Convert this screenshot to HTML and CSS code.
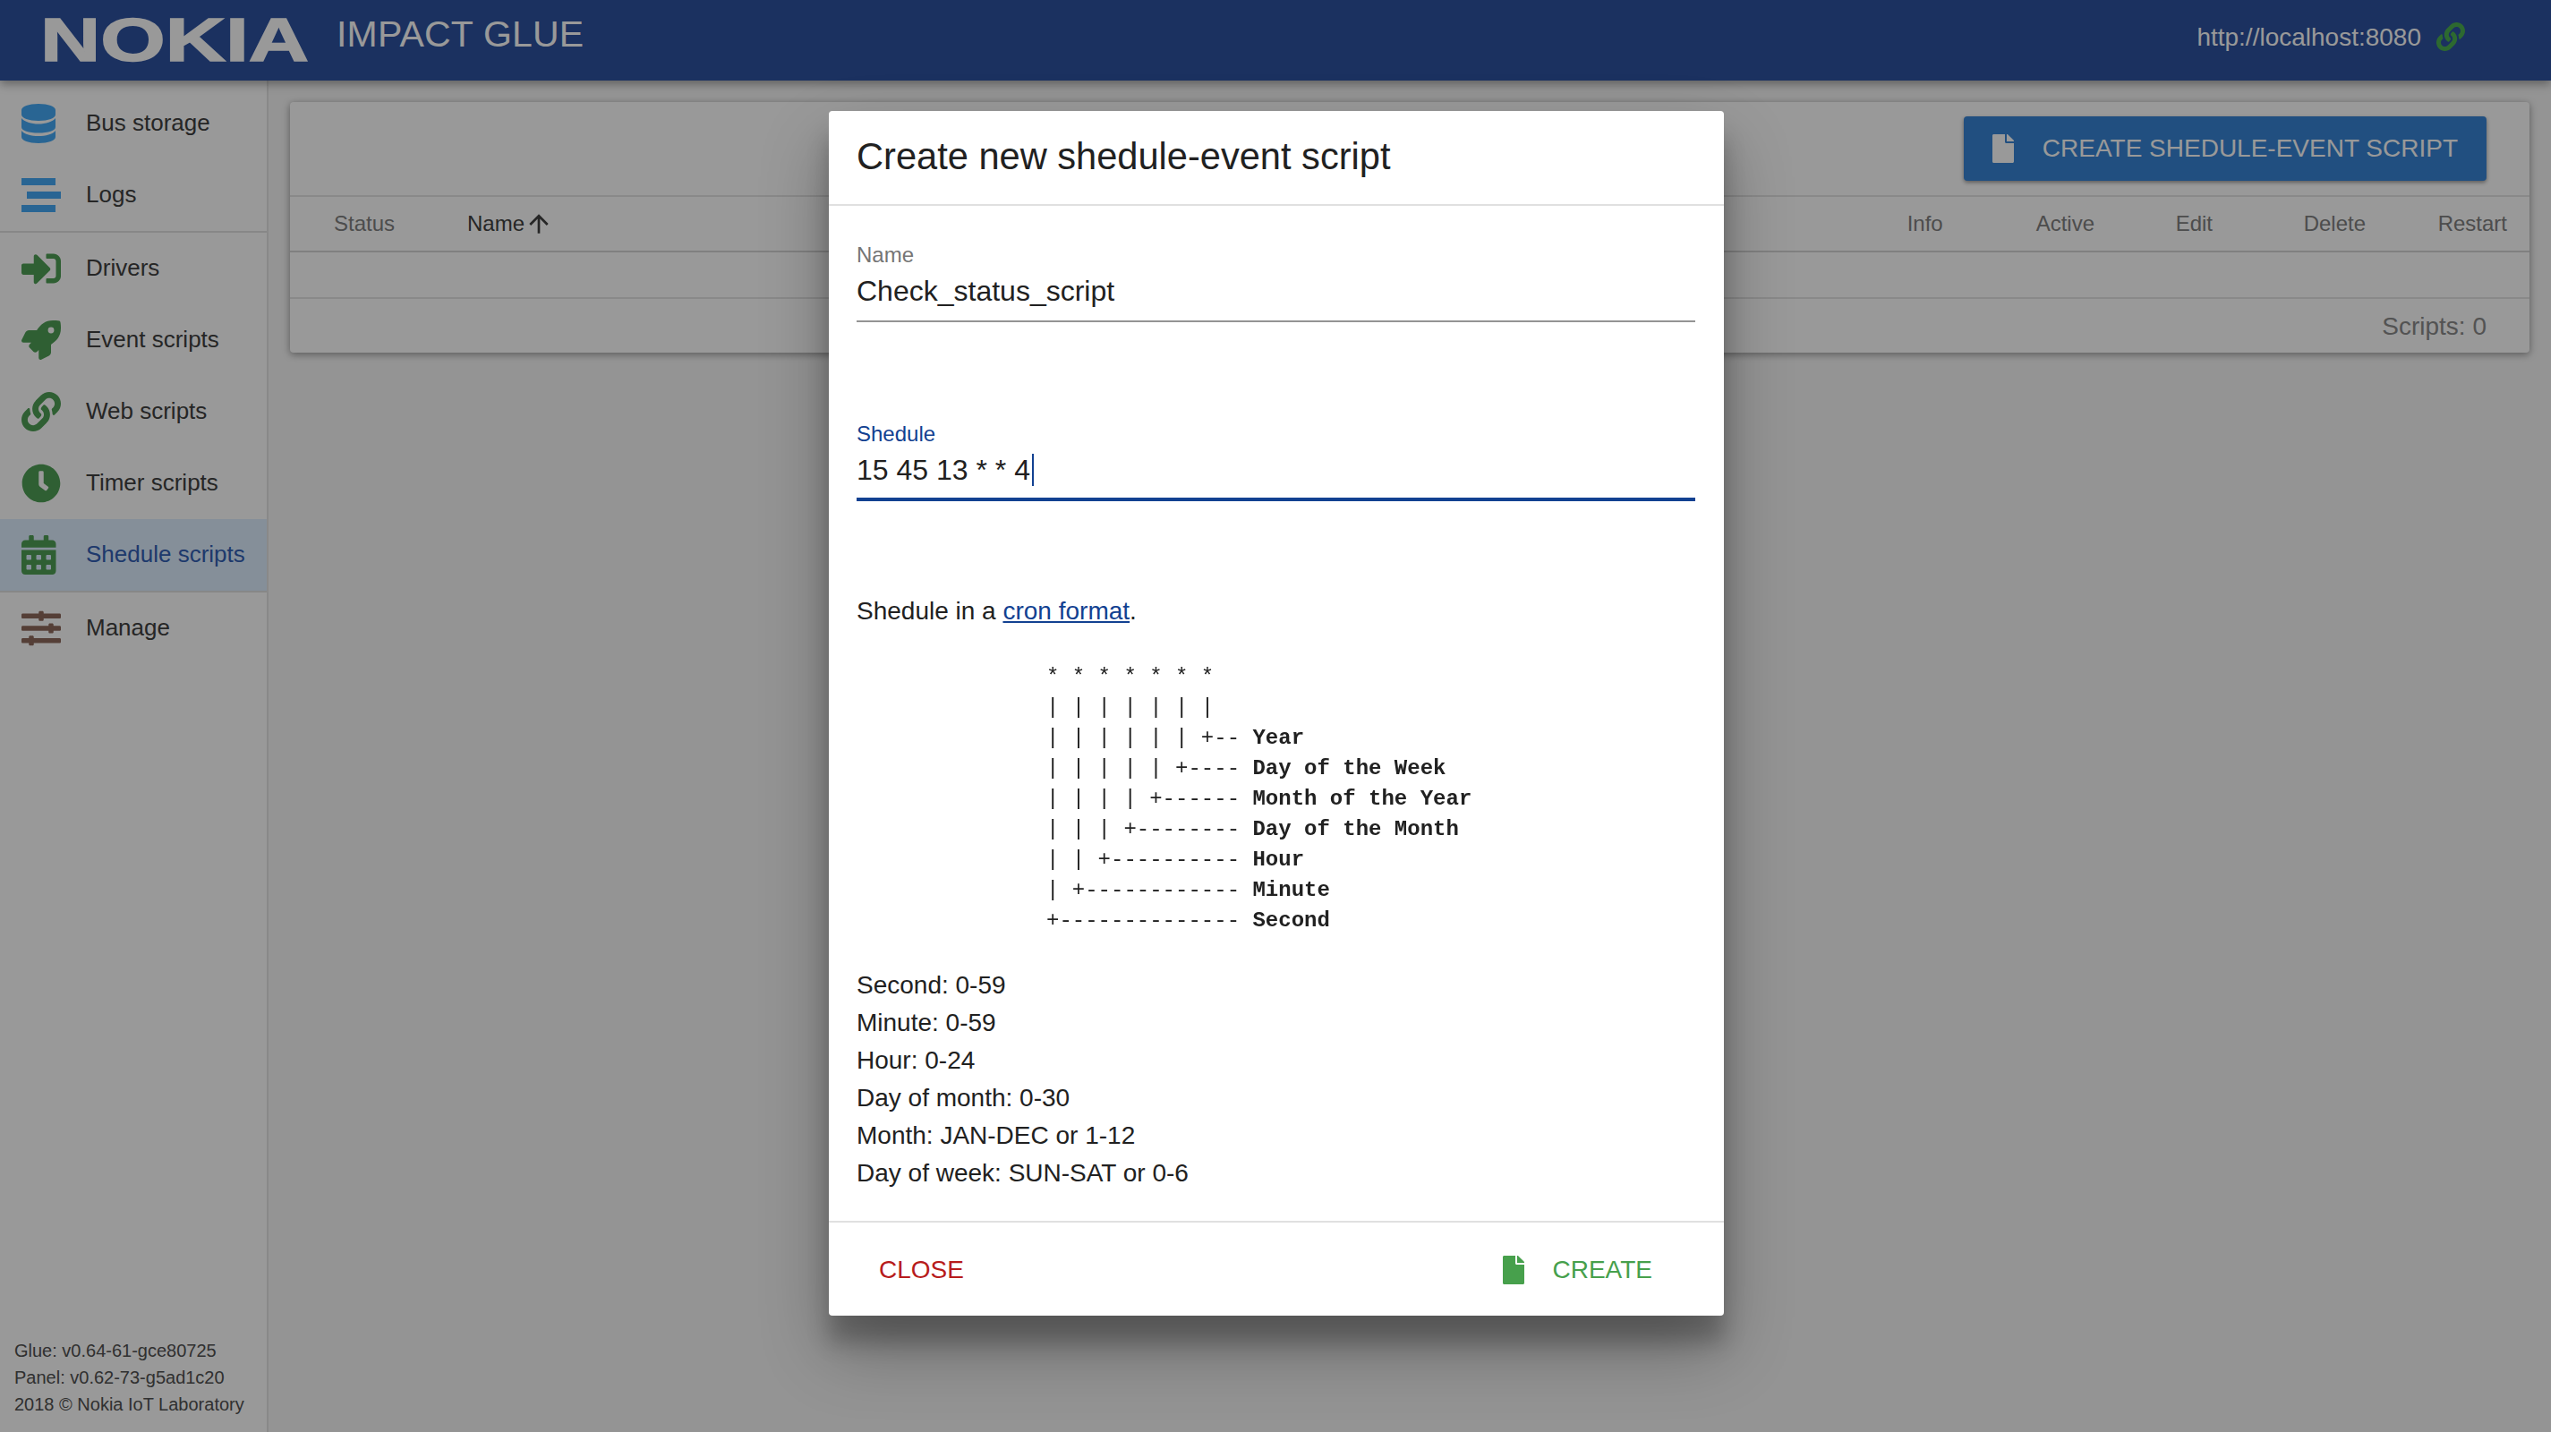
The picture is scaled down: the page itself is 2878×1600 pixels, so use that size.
FILE: index.html
```html
<!DOCTYPE html>
<html>

<head>
    <title>Impact Glue</title>
    <link rel="stylesheet" href="styles.css">
</head>

<body>
    <div class="app">
        <header class="topbar">
            <svg class="logo" viewBox="0 0 296 49"><text x="-3" y="49" textLength="300" lengthAdjust="spacingAndGlyphs">NOKIA</text></svg>
            <div class="app-title">IMPACT GLUE</div>
            <div class="endpoint">http://localhost:8080</div>
            <svg class="endpoint-icon" viewBox="0 0 512 512"><path d="M326.612 185.391c59.747 59.809 58.927 155.698.36 214.59-.11.12-.24.25-.36.37l-67.2 67.2c-59.27 59.27-155.699 59.262-214.96 0-59.27-59.26-59.27-155.7 0-214.96l37.106-37.106c9.84-9.84 26.786-3.3 27.294 10.606.648 17.722 3.826 35.527 9.69 52.721 1.986 5.822.567 12.262-3.783 16.612l-13.087 13.087c-28.026 28.026-28.905 73.66-1.155 101.96 28.024 28.579 74.086 28.749 102.325.51l67.2-67.19c28.191-28.191 28.073-73.757 0-101.83-3.701-3.694-7.429-6.564-10.341-8.569a16.037 16.037 0 0 1-6.947-12.606c-.396-10.567 3.348-21.456 11.698-29.806l21.054-21.055c5.521-5.521 14.182-6.199 20.584-1.731a152.482 152.482 0 0 1 20.522 17.197zM467.547 44.449c-59.261-59.262-155.69-59.27-214.96 0l-67.2 67.2c-.12.12-.25.25-.36.37-58.566 58.892-59.387 154.781.36 214.59a152.454 152.454 0 0 0 20.521 17.196c6.402 4.468 15.064 3.789 20.584-1.731l21.054-21.055c8.35-8.35 12.094-19.239 11.698-29.806a16.037 16.037 0 0 0-6.947-12.606c-2.912-2.005-6.64-4.875-10.341-8.569-28.073-28.073-28.191-73.639 0-101.83l67.2-67.19c28.239-28.239 74.3-28.069 102.325.51 27.75 28.3 26.872 73.934-1.155 101.96l-13.087 13.087c-4.35 4.35-5.769 10.79-3.783 16.612 5.864 17.194 9.042 34.999 9.69 52.721.509 13.906 17.454 20.446 27.294 10.606l37.106-37.106c59.271-59.259 59.271-155.699.001-214.959z"/></svg>
        </header>

        <div class="layout">
            <nav class="sidebar">
                <ul class="nav-group">
                    <li class="nav-item">
                        <span class="nav-icon blue"><svg viewBox="0 0 38 44"><path d="M0 7C0 3 8 0 19 0s19 3 19 7v5c0 4-8 7-19 7S0 16 0 12z"/><path d="M0 16c3 4 11 6.500 19 6.500S35 20 38 16v10c0 4-8 6.500-19 6.500S0 30 0 26z"/><path d="M0 30c3 4 11 6 19 6s16-2 19-6v7c0 4-8 7-19 7S0 41 0 37z"/></svg></span>
                        Bus storage
                    </li>
                    <li class="nav-item">
                        <span class="nav-icon blue"><svg viewBox="0 0 44 38"><rect x="0" y="0" width="38" height="8"/><rect x="6" y="15" width="38" height="8"/><rect x="0" y="30" width="38" height="8"/></svg></span>
                        Logs
                    </li>
                </ul>
                <ul class="nav-group">
                    <li class="nav-item">
                        <span class="nav-icon green"><svg viewBox="0 0 512 512"><path d="M416 448h-84c-6.600 0-12-5.400-12-12v-40c0-6.600 5.400-12 12-12h84c17.700 0 32-14.300 32-32V160c0-17.700-14.300-32-32-32h-84c-6.600 0-12-5.400-12-12V76c0-6.600 5.400-12 12-12h84c53 0 96 43 96 96v192c0 53-43 96-96 96zm-47-201L201 79c-15-15-41-4.500-41 17v96H24c-13.300 0-24 10.700-24 24v96c0 13.300 10.700 24 24 24h136v96c0 21.500 26 32 41 17l168-168c9.300-9.400 9.300-24.600 0-34z"/></svg></span>
                        Drivers
                    </li>
                    <li class="nav-item">
                        <span class="nav-icon green"><svg viewBox="0 0 512 512"><path d="M505.12019,19.09375c-1.18945-5.53125-6.65819-11-12.207-12.1875C460.716,0,435.507,0,410.40747,0,307.17523,0,245.26909,55.20312,199.05238,128H94.83772c-16.34763.01562-35.55658,11.875-42.88664,26.48438L2.51562,253.29688A28.4,28.4,0,0,0,0,264a24.00867,24.00867,0,0,0,24.00582,24H127.81618l-22.47457,22.46875c-11.36521,11.36133-12.99607,32.25781,0,45.25L156.24582,406.625c11.15623,11.1875,32.15619,13.15625,45.27726,0l22.47457-22.46875V488a24.00867,24.00867,0,0,0,24.00581,24,28.55934,28.55934,0,0,0,10.707-2.51562l98.72834-49.39063c14.62888-7.29687,26.50776-26.5,26.50776-42.85937V312.79688c72.59753-46.3125,128.03493-108.40626,128.03493-211.09376C512.07526,76.5,512.07526,51.29688,505.12019,19.09375ZM384.04033,168A40,40,0,1,1,424.05,128,40.02322,40.02322,0,0,1,384.04033,168Z"/></svg></span>
                        Event scripts
                    </li>
                    <li class="nav-item">
                        <span class="nav-icon green"><svg viewBox="0 0 512 512"><path d="M326.612 185.391c59.747 59.809 58.927 155.698.36 214.59-.11.12-.24.25-.36.37l-67.2 67.2c-59.27 59.27-155.699 59.262-214.96 0-59.27-59.26-59.27-155.7 0-214.96l37.106-37.106c9.84-9.84 26.786-3.3 27.294 10.606.648 17.722 3.826 35.527 9.69 52.721 1.986 5.822.567 12.262-3.783 16.612l-13.087 13.087c-28.026 28.026-28.905 73.66-1.155 101.96 28.024 28.579 74.086 28.749 102.325.51l67.2-67.19c28.191-28.191 28.073-73.757 0-101.83-3.701-3.694-7.429-6.564-10.341-8.569a16.037 16.037 0 0 1-6.947-12.606c-.396-10.567 3.348-21.456 11.698-29.806l21.054-21.055c5.521-5.521 14.182-6.199 20.584-1.731a152.482 152.482 0 0 1 20.522 17.197zM467.547 44.449c-59.261-59.262-155.69-59.27-214.96 0l-67.2 67.2c-.12.12-.25.25-.36.37-58.566 58.892-59.387 154.781.36 214.59a152.454 152.454 0 0 0 20.521 17.196c6.402 4.468 15.064 3.789 20.584-1.731l21.054-21.055c8.35-8.35 12.094-19.239 11.698-29.806a16.037 16.037 0 0 0-6.947-12.606c-2.912-2.005-6.64-4.875-10.341-8.569-28.073-28.073-28.191-73.639 0-101.83l67.2-67.19c28.239-28.239 74.3-28.069 102.325.51 27.75 28.3 26.872 73.934-1.155 101.96l-13.087 13.087c-4.35 4.35-5.769 10.79-3.783 16.612 5.864 17.194 9.042 34.999 9.69 52.721.509 13.906 17.454 20.446 27.294 10.606l37.106-37.106c59.271-59.259 59.271-155.699.001-214.959z"/></svg></span>
                        Web scripts
                    </li>
                    <li class="nav-item">
                        <span class="nav-icon green"><svg viewBox="0 0 512 512"><path d="M256,8C119,8,8,119,8,256S119,504,256,504,504,393,504,256,393,8,256,8Zm92.490,313h0l-20,25a16,16,0,0,1-22.490,2.500h0l-67-49.720a40,40,0,0,1-15-31.230V112a16,16,0,0,1,16-16h32a16,16,0,0,1,16,16V256l58,42.500A16,16,0,0,1,348.490,321Z"/></svg></span>
                        Timer scripts
                    </li>
                    <li class="nav-item active">
                        <span class="nav-icon green"><svg viewBox="0 0 448 512"><path d="M0 464c0 26.500 21.500 48 48 48h352c26.500 0 48-21.500 48-48V192H0v272zm320-196c0-6.600 5.400-12 12-12h40c6.600 0 12 5.400 12 12v40c0 6.600-5.400 12-12 12h-40c-6.600 0-12-5.400-12-12v-40zm0 128c0-6.600 5.400-12 12-12h40c6.600 0 12 5.400 12 12v40c0 6.600-5.400 12-12 12h-40c-6.600 0-12-5.400-12-12v-40zM192 268c0-6.600 5.400-12 12-12h40c6.600 0 12 5.400 12 12v40c0 6.600-5.400 12-12 12h-40c-6.600 0-12-5.400-12-12v-40zm0 128c0-6.600 5.400-12 12-12h40c6.600 0 12 5.400 12 12v40c0 6.600-5.400 12-12 12h-40c-6.600 0-12-5.400-12-12v-40zM64 268c0-6.600 5.400-12 12-12h40c6.600 0 12 5.400 12 12v40c0 6.600-5.400 12-12 12H76c-6.600 0-12-5.400-12-12v-40zm0 128c0-6.600 5.400-12 12-12h40c6.600 0 12 5.400 12 12v40c0 6.600-5.400 12-12 12H76c-6.600 0-12-5.400-12-12v-40zM400 64h-48V16c0-8.800-7.200-16-16-16h-32c-8.800 0-16 7.200-16 16v48H160V16c0-8.800-7.200-16-16-16h-32c-8.800 0-16 7.200-16 16v48H48C21.500 64 0 85.500 0 112v48h448v-48c0-26.500-21.500-48-48-48z"/></svg></span>
                        Shedule scripts
                    </li>
                </ul>
                <ul class="nav-group">
                    <li class="nav-item">
                        <span class="nav-icon brown"><svg viewBox="0 0 512 512"><path d="M496 384H160v-16c0-8.800-7.200-16-16-16h-32c-8.800 0-16 7.200-16 16v16H16c-8.800 0-16 7.200-16 16v32c0 8.800 7.200 16 16 16h80v16c0 8.800 7.200 16 16 16h32c8.800 0 16-7.200 16-16v-16h336c8.800 0 16-7.200 16-16v-32c0-8.800-7.200-16-16-16zm0-160h-80v-16c0-8.800-7.200-16-16-16h-32c-8.800 0-16 7.200-16 16v16H16c-8.800 0-16 7.200-16 16v32c0 8.800 7.200 16 16 16h336v16c0 8.800 7.200 16 16 16h32c8.800 0 16-7.200 16-16v-16h80c8.800 0 16-7.200 16-16v-32c0-8.800-7.200-16-16-16zm0-160H288V48c0-8.800-7.200-16-16-16h-32c-8.800 0-16 7.200-16 16v16H16C7.200 64 0 71.200 0 80v32c0 8.800 7.200 16 16 16h208v16c0 8.800 7.200 16 16 16h32c8.800 0 16-7.200 16-16v-16h208c8.800 0 16-7.200 16-16V80c0-8.800-7.200-16-16-16z"/></svg></span>
                        Manage
                    </li>
                </ul>
                <div class="versions">
                    <div>Glue: v0.64-61-gce80725</div>
                    <div>Panel: v0.62-73-g5ad1c20</div>
                    <div>2018 © Nokia IoT Laboratory</div>
                </div>
            </nav>

            <main class="main">
                <section class="card">
                    <div class="toolbar">
                        <button class="btn-create">
                            <svg class="file-icon" viewBox="0 0 384 512"><path d="M224 136V0H24C10.700 0 0 10.700 0 24v464c0 13.300 10.700 24 24 24h336c13.300 0 24-10.700 24-24V160H248c-13.200 0-24-10.800-24-24zm160-14.100v6.100H256V0h6.100c6.400 0 12.500 2.500 17 7l97.900 98c4.500 4.500 7 10.600 7 16.900z"/></svg>
                            CREATE SHEDULE-EVENT SCRIPT
                        </button>
                    </div>
                    <div class="table-head">
                        <div class="col-status">Status</div>
                        <div class="col-name">Name
                            <svg class="sort-icon" viewBox="0 0 24 24"><path d="M4 12l1.410 1.410L11 7.830V20h2V7.830l5.580 5.590L20 12l-8-8-8 8z"/></svg>
                        </div>
                        <div class="col-info">Info</div>
                        <div class="col-active">Active</div>
                        <div class="col-edit">Edit</div>
                        <div class="col-delete">Delete</div>
                        <div class="col-restart">Restart</div>
                    </div>
                    <div class="table-row"></div>
                    <div class="table-foot">Scripts: 0</div>
                </section>
            </main>
        </div>

        <div class="overlay">
            <div class="dialog">
                <h3 class="dialog-title">Create new shedule-event script</h3>
                <div class="dialog-body">
                    <div class="field">
                        <label class="field-label">Name</label>
                        <div class="field-input">Check_status_script</div>
                    </div>
                    <div class="field focused">
                        <label class="field-label">Shedule</label>
                        <div class="field-input">15 45 13 * * 4<span class="caret"></span></div>
                    </div>
                    <p class="cron-note">Shedule in a <a href="#">cron format</a>.</p>
<pre class="cron-tree">* * * * * * *
| | | | | | |
| | | | | | +-- <b>Year</b>
| | | | | +---- <b>Day of the Week</b>
| | | | +------ <b>Month of the Year</b>
| | | +-------- <b>Day of the Month</b>
| | +---------- <b>Hour</b>
| +------------ <b>Minute</b>
+-------------- <b>Second</b></pre>
                    <div class="cron-ranges">
                        <div>Second: 0-59</div>
                        <div>Minute: 0-59</div>
                        <div>Hour: 0-24</div>
                        <div>Day of month: 0-30</div>
                        <div>Month: JAN-DEC or 1-12</div>
                        <div>Day of week: SUN-SAT or 0-6</div>
                    </div>
                </div>
                <div class="dialog-foot">
                    <button class="btn-flat close">CLOSE</button>
                    <button class="btn-flat create">
                        <svg class="file-icon" viewBox="0 0 384 512"><path d="M224 136V0H24C10.700 0 0 10.700 0 24v464c0 13.300 10.700 24 24 24h336c13.300 0 24-10.700 24-24V160H248c-13.200 0-24-10.800-24-24zm160-14.100v6.100H256V0h6.100c6.400 0 12.500 2.500 17 7l97.900 98c4.500 4.500 7 10.600 7 16.900z"/></svg>
                        CREATE
                    </button>
                </div>
            </div>
        </div>
    </div>
</body>

</html>
```

FILE: styles.css
```css
* {
    box-sizing: border-box;
}

body {
    margin: 0;
    background-color: #fff;
    font-family: "Liberation Sans", Arial, sans-serif;
    color: #212121;
}

.app {
    position: relative;
    width: 2850px;
    height: 1600px;
    overflow: hidden;
    background-color: #f7f7f7;
}

/* top bar */
.topbar {
    position: relative;
    z-index: 2;
    height: 90px;
    display: flex;
    align-items: center;
    background-color: #2d52a0;
    color: #fff;
    box-shadow: 0 4px 10px rgba(0, 0, 0, .35);
}

.logo {
    width: 296px;
    height: 49px;
    margin: -4px 0 0 48px;
    overflow: visible;
}

.logo text {
    font-family: "Liberation Sans", Arial, sans-serif;
    font-size: 68px;
    font-weight: bold;
    fill: #fff;
    stroke: #fff;
    stroke-width: 1.5px;
}

.app-title {
    margin: -14px 0 0 32px;
    font-size: 41px;
    letter-spacing: .2px;
}

.endpoint {
    margin: -6px 0 0 auto;
    font-size: 28px;
}

.endpoint-icon {
    width: 32px;
    height: 32px;
    margin: -8px 96px 0 17px;
    fill: #4caf50;
}

/* sidebar */
.layout {
    display: flex;
    height: 1510px;
}

.sidebar {
    width: 300px;
    padding-top: 8px;
    display: flex;
    flex-direction: column;
    background-color: #fff;
    border-right: 2px solid #e4e4e4;
}

.nav-group {
    margin: 0;
    padding: 0;
    list-style: none;
    border-bottom: 2px solid #e2e2e2;
}

.nav-group:last-of-type {
    border-bottom: none;
}

.nav-item {
    height: 80px;
    padding: 0 0 2px 24px;
    display: flex;
    align-items: center;
    font-size: 26px;
    color: #404040;
}

.nav-item.active {
    background-color: #deeeff;
    color: #3260b4;
}

.nav-icon {
    width: 44px;
    height: 44px;
    margin: 2px 28px 0 0;
    display: flex;
    align-items: center;
}

.nav-icon svg {
    height: 100%;
    max-width: 100%;
    fill: currentColor;
}

.nav-icon.blue {
    color: #45a9f5;
}

.nav-icon.green {
    color: #4f9f55;
}

.nav-icon.brown {
    color: #8e6a5c;
}

.versions {
    margin-top: auto;
    padding: 0 0 16px 16px;
    font-size: 20px;
    line-height: 30px;
    color: #505050;
}

/* scripts table */
.main {
    flex: 1;
    padding: 24px;
}

.card {
    background-color: #fff;
    border-radius: 4px;
    box-shadow: 0 2px 8px rgba(0, 0, 0, .4);
}

.toolbar {
    height: 106px;
    padding: 16px 48px 0 0;
    display: flex;
    justify-content: flex-end;
    align-items: flex-start;
    border-bottom: 2px solid #e4e4e4;
}

.btn-create {
    height: 72px;
    padding: 0 32px;
    display: flex;
    align-items: center;
    gap: 32px;
    border: none;
    border-radius: 4px;
    background-color: #3784d5;
    color: #fff;
    font-family: inherit;
    font-size: 28px;
    box-shadow: 0 2px 4px rgba(0, 0, 0, .4);
}

.file-icon {
    width: 24px;
    height: 32px;
    fill: currentColor;
}

.table-head {
    height: 62px;
    padding: 0 25px 0 49px;
    display: flex;
    align-items: center;
    border-bottom: 2px solid #d6d6d6;
    font-size: 24px;
    color: #808080;
}

.col-status {
    width: 149px;
}

.col-name {
    margin-right: auto;
    display: flex;
    align-items: center;
    color: #404040;
}

.sort-icon {
    width: 32px;
    height: 32px;
    fill: currentColor;
}

.col-info {
    width: 144px;
}

.col-active {
    width: 156px;
}

.col-edit {
    width: 143px;
}

.col-delete {
    width: 150px;
}

.table-row {
    height: 52px;
    border-bottom: 2px solid #e4e4e4;
}

.table-foot {
    height: 60px;
    padding: 1px 48px 0 0;
    display: flex;
    justify-content: flex-end;
    align-items: center;
    font-size: 28px;
    color: #8a8a8a;
}

/* modal */
.overlay {
    position: absolute;
    top: 0;
    left: 0;
    width: 100%;
    height: 100%;
    z-index: 5;
    padding: 124px 0 0 2px;
    display: flex;
    justify-content: center;
    align-items: flex-start;
    background-color: rgba(0, 0, 0, .4);
}

.dialog {
    width: 1000px;
    height: 1346px;
    display: flex;
    flex-direction: column;
    background-color: #fff;
    border-radius: 4px;
    box-shadow: 0 38px 76px rgba(0, 0, 0, .3), 0 30px 24px rgba(0, 0, 0, .22);
}

.dialog-title {
    height: 106px;
    margin: 0;
    padding: 0 31px 2px;
    display: flex;
    align-items: center;
    border-bottom: 2px solid #e0e0e0;
    font-size: 41.6px;
    font-weight: normal;
}

.dialog-body {
    flex: 1;
    padding: 41px 32px 0 31px;
}

.field {
    height: 89px;
    margin-bottom: 111px;
    border-bottom: 2px solid #949494;
}

.field.focused {
    margin-bottom: 102px;
    border-bottom: 4px solid #124191;
}

.field-label {
    display: block;
    font-size: 24px;
    line-height: 28px;
    color: #757575;
}

.focused .field-label {
    color: #124191;
}

.field-input {
    height: 40px;
    margin-top: 6px;
    display: flex;
    align-items: center;
    font-size: 32px;
    line-height: 40px;
}

.caret {
    width: 2px;
    height: 36px;
    margin-left: 2px;
    background-color: #124191;
}

.cron-note {
    margin: 0;
    font-size: 28px;
    line-height: 42px;
}

.cron-note a {
    color: #124191;
}

.cron-tree {
    margin: 36px 0 34px 212px;
    font-family: "Liberation Mono", "Courier New", monospace;
    font-size: 24px;
    line-height: 34px;
    will-change: transform;
}

.cron-ranges {
    font-size: 28px;
    line-height: 42px;
}

.dialog-foot {
    height: 106px;
    padding: 2px 80px 0 56px;
    display: flex;
    justify-content: space-between;
    align-items: center;
    border-top: 2px solid #e0e0e0;
}

.btn-flat {
    padding: 0;
    display: flex;
    align-items: center;
    gap: 32px;
    border: none;
    background: none;
    font-family: inherit;
    font-size: 28px;
}

.btn-flat.close {
    color: #b71c1c;
}

.btn-flat.create {
    color: #47a04c;
}
```
